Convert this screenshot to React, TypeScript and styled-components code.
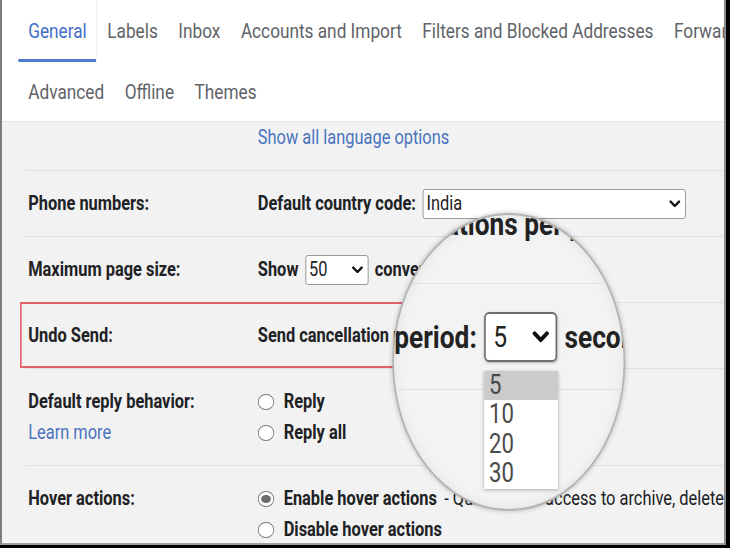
import React, { FC } from 'react';
import styled, { createGlobalStyle } from 'styled-components';

// the capture is squeezed horizontally, so the page is laid out wide and scaled back
const SQUEEZE = 0.82;

const GlobalStyle = createGlobalStyle`
  html, body {
    margin: 0;
    padding: 0;
    background: #000;
  }
  body {
    font-family: Roboto, "Liberation Sans", Arial, sans-serif;
  }
`;

const Screen = styled.div`
  box-sizing: border-box;
  width: 726px;
  height: 545px;
  border-left: 2px solid #7c7c7c;
  border-right: 2px solid #8c8c8c;
  border-bottom: 2px solid #a0a0a0;
  background: #f2f2f2;
  overflow: hidden;
`;

const Stage = styled.div`
  position: relative;
  width: ${722 / SQUEEZE}px;
  height: 543px;
  transform: scaleX(${SQUEEZE});
  transform-origin: 0 0;
`;

const Header = styled.header`
  box-sizing: border-box;
  height: 122px;
  background: #fff;
  border-bottom: 1px solid #e4e4e4;
`;

const TabRow = styled.nav<{ $height: number }>`
  display: flex;
  height: ${p => p.$height}px;
  padding-left: 20px;
`;

const Tab = styled.div<{ $active?: boolean }>`
  display: flex;
  align-items: center;
  padding: 0 12px;
  font-size: 21px;
  white-space: nowrap;
  color: ${p => (p.$active ? '#3f6fc8' : '#5f6368')};
  box-shadow: ${p => (p.$active ? 'inset 0 -3px 0 #4a7bd0' : 'none')};
  border-right: 1px solid ${p => (p.$active ? '#ececec' : 'transparent')};
`;

const Settings = styled.section`
  display: flex;
  flex-direction: column;
`;

const Row = styled.div<{ $first?: boolean; $highlight?: boolean }>`
  position: relative;
  display: grid;
  grid-template-columns: 283px 1fr;
  margin-left: 29px;
  padding: ${p => (p.$first ? '0 0 17px' : '17px 0')};
  border-top: ${p => (p.$first ? 'none' : '1px solid #e1e1e1')};
  font-size: 20px;
  line-height: 31px;
  color: #202124;

  &::after {
    content: '';
    display: ${p => (p.$highlight ? 'block' : 'none')};
    position: absolute;
    left: -7px;
    top: -1px;
    bottom: 0;
    width: 560px;
    border: 2px solid #e2606b;
  }
`;

const Label = styled.div`
  display: flex;
  flex-direction: column;
  padding-left: 3px;
  font-weight: 700;
  white-space: nowrap;
`;

const Value = styled.div`
  display: flex;
  flex-direction: column;
  white-space: nowrap;
`;

const Line = styled.div`
  display: flex;
  align-items: center;
  gap: 8px;
  height: 31px;
  font-weight: 700;
`;

const Link = styled.span`
  color: #4a72c0;
  font-weight: 400;
`;

const Plain = styled.span`
  font-weight: 400;
  margin-left: -4px;
`;

const SelectShell = styled.span<{ $width: number; $big?: boolean }>`
  box-sizing: border-box;
  display: inline-flex;
  align-items: center;
  justify-content: space-between;
  width: ${p => p.$width}px;
  height: ${p => (p.$big ? 50 : 30)}px;
  padding: ${p => (p.$big ? '0 7px 0 9px' : '0 5px 0 4px')};
  border: ${p => (p.$big ? '2px solid #6f6f6f' : '1px solid #8f8f8f')};
  border-radius: ${p => (p.$big ? 6 : 3)}px;
  background: #fff;
  font-size: ${p => (p.$big ? 30 : 20)}px;
  font-weight: 400;
  color: #222;
  box-shadow: ${p => (p.$big ? '0 1px 3px rgba(0,0,0,0.25)' : 'none')};
`;

const Chevron: FC<{ w: number; h: number; stroke: number }> = ({ w, h, stroke }) => (
  <svg width={w} height={h} viewBox="0 0 16 10" preserveAspectRatio="none">
    <path d="M2.5 2 L8 7.5 L13.5 2" fill="none" stroke="#111" strokeWidth={stroke}
          strokeLinecap="round" strokeLinejoin="round" />
  </svg>
);

const Select: FC<{ width: number; value: string; big?: boolean }> = ({ width, value, big }) => (
  <SelectShell $width={width} $big={big}>
    <span>{value}</span>
    {big ? <Chevron w={22} h={12} stroke={3.4} /> : <Chevron w={15} h={8} stroke={3} />}
  </SelectShell>
);

const Radio = styled.span<{ $checked?: boolean }>`
  box-sizing: border-box;
  position: relative;
  width: ${16 / SQUEEZE}px;
  height: 16px;
  margin-right: 4px;
  border: 1.5px solid #7a7a7a;
  border-radius: 50%;
  background: #fff;

  &::after {
    content: '';
    display: ${p => (p.$checked ? 'block' : 'none')};
    position: absolute;
    inset: 3px;
    border-radius: 50%;
    background: #6b6b6b;
  }
`;

/* magnifier overlay */

const Magnifier = styled.div`
  position: absolute;
  left: 476px;
  top: 213px;
  box-sizing: border-box;
  width: 284px;
  height: 298px;
  border-radius: 50%;
  border: 2px solid #b3b3b3;
  background: #f3f3f3;
  overflow: hidden;
  box-shadow: 0 0 6px rgba(0, 0, 0, 0.25), inset 0 0 12px rgba(0, 0, 0, 0.08);
`;

const MagInner = styled.div`
  margin-top: -50px;
  display: flex;
  flex-direction: column;
`;

const MagRow = styled.div<{ $first?: boolean }>`
  display: flex;
  align-items: center;
  gap: 9px;
  height: ${p => (p.$first ? 118 : 105)}px;
  border-top: ${p => (p.$first ? 'none' : '1px solid #e0e0e0')};
  font-size: 32px;
  font-weight: 700;
  color: #222;
  white-space: nowrap;
`;

const MagShift = styled.span<{ $left: number }>`
  margin-left: ${p => p.$left}px;
`;

const MagLabel = styled.div`
  display: flex;
  justify-content: flex-end;
  width: 101px;
  flex-shrink: 0;
`;

const Dropdown = styled.div`
  position: relative;
`;

const OptionList = styled.ul`
  position: absolute;
  left: 0;
  top: calc(100% + 9px);
  width: 90px;
  margin: 0;
  padding: 0;
  list-style: none;
  background: #fff;
  box-shadow: 0 1px 4px rgba(0, 0, 0, 0.3);
`;

const Option = styled.li<{ $selected?: boolean }>`
  height: 29.5px;
  line-height: 29.5px;
  padding-left: 6px;
  font-size: 27px;
  font-weight: 400;
  color: #4a4a4a;
  background: ${p => (p.$selected ? '#cbcbcb' : 'transparent')};
`;

const primaryTabs = ['General', 'Labels', 'Inbox', 'Accounts and Import', 'Filters and Blocked Addresses', 'Forwarding and POP/IMAP'];
const secondaryTabs = ['Advanced', 'Offline', 'Themes'];

export default function App() {
  return (
    <>
      <GlobalStyle />
      <Screen>
        <Stage>
          <Header>
            <TabRow $height={62}>
              {primaryTabs.map(t => <Tab key={t} $active={t === 'General'}>{t}</Tab>)}
            </TabRow>
            <TabRow $height={60}>
              {secondaryTabs.map(t => <Tab key={t}>{t}</Tab>)}
            </TabRow>
          </Header>

          <Settings>
            <Row $first>
              <Label />
              <Value><Line><Link>Show all language options</Link></Line></Value>
            </Row>
            <Row>
              <Label>Phone numbers:</Label>
              <Value>
                <Line>Default country code: <Select width={321} value="India" /></Line>
              </Value>
            </Row>
            <Row>
              <Label>Maximum page size:</Label>
              <Value>
                <Line>Show <Select width={77} value="50" /> conversations per page</Line>
              </Value>
            </Row>
            <Row $highlight>
              <Label>Undo Send:</Label>
              <Value>
                <Line>Send cancellation period: <Select width={56} value="5" /> seconds</Line>
              </Value>
            </Row>
            <Row>
              <Label>
                Default reply behavior:
                <Link>Learn more</Link>
              </Label>
              <Value>
                <Line><Radio />Reply</Line>
                <Line><Radio />Reply all</Line>
              </Value>
            </Row>
            <Row>
              <Label>Hover actions:</Label>
              <Value>
                <Line>
                  <Radio $checked />Enable hover actions
                  <Plain>&nbsp;- Quickly gain access to archive, delete, mark as read, and snooze controls on hover.</Plain>
                </Line>
                <Line><Radio />Disable hover actions</Line>
              </Value>
            </Row>
          </Settings>

          <Magnifier>
            <MagInner>
              <MagRow $first>
                <MagShift $left={-52}>conversations per page</MagShift>
              </MagRow>
              <MagRow>
                <MagLabel>Send cancellation period:</MagLabel>
                <Dropdown>
                  <Select big width={89} value="5" />
                  <OptionList>
                    {['5', '10', '20', '30'].map(v => (
                      <Option key={v} $selected={v === '5'}>{v}</Option>
                    ))}
                  </OptionList>
                </Dropdown>
                seconds
              </MagRow>
              <MagRow />
            </MagInner>
          </Magnifier>
        </Stage>
      </Screen>
    </>
  );
}
